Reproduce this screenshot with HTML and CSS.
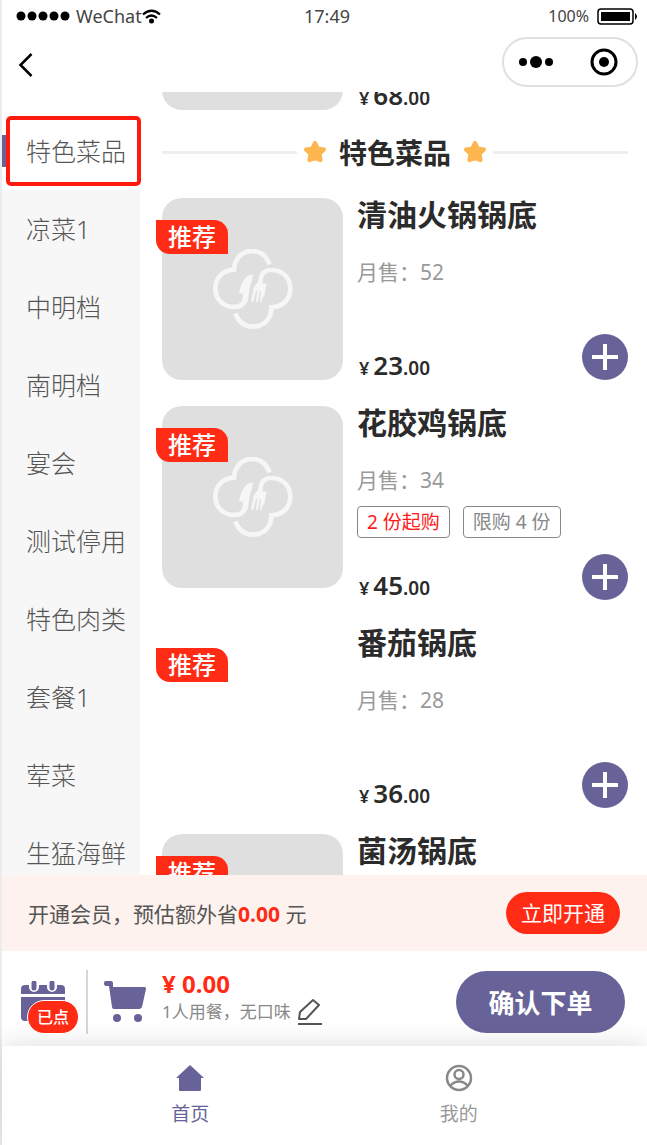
FILE: index.html
```html
<!DOCTYPE html>
<html lang="zh-CN">
<head>
    <meta charset="UTF-8">
    <meta name="viewport" content="width=device-width, initial-scale=1.0">
    <title>点餐</title>
    <link rel="stylesheet" href="styles.css">
</head>
<body>
    <!-- shared shapes -->
    <svg class="sprite" aria-hidden="true">
        <symbol id="logo" viewBox="190 180 240 240">
            <g fill="none" stroke="#f6f6f6" stroke-width="14">
                <path d="M360 226C350 200 333 186 307 186C276 186 254 210 253 242C218 244 197 268 197 299C197 331 222 354 254 354C275 354 286 344 288 322"/>
                <path d="M328 296L334 266C337 249 348 243 366 243C399 243 422 267 422 299C422 331 400 353 365 355C366 388 343 413 310 413C285 413 266 399 257 373"/>
            </g>
            <path fill="#f6f6f6" d="M311 256C288 258 276 276 268 312L281 314L276 344L293 340L300 298Z"/>
            <path fill="#f6f6f6" d="M322 282L351 284L344 318C342 325 338 325 336 338H331L334 308L330 307L325 338H319L323 306L319 305L311 338H304L312 296Z"/>
        </symbol>
        <symbol id="star" viewBox="0 0 24 24">
            <path d="M12 3L14.800 8.600L21 9.500L16.500 13.900L17.600 20.200L12 18.300L6.400 20.200L7.500 13.900L3 9.500L9.200 8.600Z" fill="#fdb64f" stroke="#fdb64f" stroke-width="4" stroke-linejoin="round"/>
        </symbol>
        <symbol id="plus" viewBox="0 0 46 46">
            <path d="M23 10V36M10 23H36" stroke="#fff" stroke-width="4"/>
        </symbol>
    </svg>

    <div class="app">
        <header class="header">
            <div class="status-bar">
                <div class="carrier">
                    <svg width="54" height="12" viewBox="0 0 54 12"><circle cx="5" cy="6" r="4.500"/><circle cx="16" cy="6" r="4.500"/><circle cx="27" cy="6" r="4.500"/><circle cx="38" cy="6" r="4.500"/><circle cx="49" cy="6" r="4.500"/></svg>
                    <span>WeChat</span>
                    <svg class="wifi" width="19" height="15" viewBox="0 0 19 15"><path d="M1 5.500Q9.500 -2 18 5.500M4 9Q9.500 4 15 9" fill="none" stroke="#000" stroke-width="2.200"/><circle cx="9.500" cy="12" r="2.500"/></svg>
                </div>
                <div class="time">17:49</div>
                <div class="battery">
                    <span>100%</span>
                    <svg width="41" height="17" viewBox="0 0 41 17"><rect x="1" y="1" width="35" height="15" rx="3" fill="none" stroke="#000" stroke-width="1.500"/><rect x="4" y="4" width="29" height="9"/><path d="M38 5Q42 8.500 38 12Z"/></svg>
                </div>
            </div>
            <div class="nav-bar">
                <button class="back" aria-label="返回">
                    <svg width="15" height="24" viewBox="0 0 15 24"><path d="M13.500 1L2.500 12L13.500 23" fill="none" stroke="#000" stroke-width="2.500"/></svg>
                </button>
                <div class="capsule">
                    <button aria-label="更多">
                        <svg width="36" height="14" viewBox="0 0 36 14"><circle cx="5" cy="7" r="4"/><circle cx="18" cy="7" r="6"/><circle cx="31" cy="7" r="4"/></svg>
                    </button>
                    <button aria-label="关闭">
                        <svg width="28" height="28" viewBox="0 0 28 28"><circle cx="14" cy="14" r="12" fill="none" stroke="#000" stroke-width="3"/><circle cx="14" cy="14" r="5"/></svg>
                    </button>
                </div>
            </div>
        </header>

        <main class="menu">
            <nav class="categories">
                <a class="category active" href="#">特色菜品</a>
                <a class="category" href="#">凉菜1</a>
                <a class="category" href="#">中明档</a>
                <a class="category" href="#">南明档</a>
                <a class="category" href="#">宴会</a>
                <a class="category" href="#">测试停用</a>
                <a class="category" href="#">特色肉类</a>
                <a class="category" href="#">套餐1</a>
                <a class="category" href="#">荤菜</a>
                <a class="category" href="#">生猛海鲜</a>
            </nav>

            <div class="dishes">
                <div class="dish scrolled">
                    <div class="thumb"></div>
                    <div class="info">
                        <div class="buy">
                            <p class="price"><small class="yen">¥</small>68<small>.00</small></p>
                        </div>
                    </div>
                </div>

                <h2 class="section-title">
                    <svg width="24" height="24"><use href="#star"/></svg>
                    <span>特色菜品</span>
                    <svg width="24" height="24"><use href="#star"/></svg>
                </h2>

                <div class="dish">
                    <div class="thumb">
                        <svg width="80" height="80"><use href="#logo"/></svg>
                        <span class="badge">推荐</span>
                    </div>
                    <div class="info">
                        <h3>清油火锅锅底</h3>
                        <p class="sales">月售：52</p>
                        <div class="buy">
                            <p class="price"><small class="yen">¥</small>23<small>.00</small></p>
                            <button class="add" aria-label="添加"><svg width="46" height="46"><use href="#plus"/></svg></button>
                        </div>
                    </div>
                </div>

                <div class="dish">
                    <div class="thumb">
                        <svg width="80" height="80"><use href="#logo"/></svg>
                        <span class="badge">推荐</span>
                    </div>
                    <div class="info">
                        <h3>花胶鸡锅底</h3>
                        <p class="sales">月售：34</p>
                        <div class="tags">
                            <span class="tag tag-red">2 份起购</span>
                            <span class="tag">限购 4 份</span>
                        </div>
                        <div class="buy">
                            <p class="price"><small class="yen">¥</small>45<small>.00</small></p>
                            <button class="add" aria-label="添加"><svg width="46" height="46"><use href="#plus"/></svg></button>
                        </div>
                    </div>
                </div>

                <div class="dish">
                    <div class="thumb empty">
                        <span class="badge">推荐</span>
                    </div>
                    <div class="info">
                        <h3>番茄锅底</h3>
                        <p class="sales">月售：28</p>
                        <div class="buy">
                            <p class="price"><small class="yen">¥</small>36<small>.00</small></p>
                            <button class="add" aria-label="添加"><svg width="46" height="46"><use href="#plus"/></svg></button>
                        </div>
                    </div>
                </div>

                <div class="dish">
                    <div class="thumb">
                        <span class="badge">推荐</span>
                    </div>
                    <div class="info">
                        <h3>菌汤锅底</h3>
                    </div>
                </div>
            </div>
        </main>

        <div class="member-bar">
            <p>开通会员，预估额外省<strong>0.00</strong> 元</p>
            <button class="btn-member">立即开通</button>
        </div>

        <div class="cart-bar">
            <button class="ordered">
                <svg width="44" height="42" viewBox="0 0 44 42">
                    <path d="M0 8Q0 4 4 4H8V6A5 5 0 0 0 18 6V4H26V6A5 5 0 0 0 36 6V4H40Q44 4 44 8V13H0Z" fill="#676398"/>
                    <path d="M0 16H44V40H4Q0 40 0 36Z" fill="#676398"/>
                    <path d="M13 2V7M31 2V7" stroke="#676398" stroke-width="5" stroke-linecap="round"/>
                </svg>
                <span class="ordered-badge">已点</span>
            </button>
            <div class="cart-icon">
                <svg width="42" height="42" viewBox="0 0 42 42" fill="#676398">
                    <path d="M2 0H7Q9 0 9 2V6H41Q42 6 42 8L38 26Q37 28 35 28H10Q8 28 8 26L5 5H2Q0 5 0 2Q0 0 2 0Z"/>
                    <circle cx="13" cy="37" r="4"/>
                    <circle cx="34" cy="37" r="4"/>
                </svg>
            </div>
            <div class="cart-info">
                <p class="total">¥ 0.00</p>
                <p class="remark">1人用餐，无口味
                    <svg width="26" height="28" viewBox="0 0 26 28" fill="none" stroke="#555" stroke-width="2"><path d="M2 21L3 14L16 2L22 7L9 21Z" stroke-linejoin="round"/><path d="M1 26H25"/></svg>
                </p>
            </div>
            <button class="btn-order">确认下单</button>
        </div>

        <nav class="tab-bar">
            <a class="tab active" href="#">
                <svg width="28" height="28" viewBox="0 0 28 28"><path d="M14 1L28 14H25V26Q25 27 24 27H4Q3 27 3 26V14H0Z" fill="#676398"/></svg>
                首页
            </a>
            <a class="tab" href="#">
                <svg width="28" height="28" viewBox="0 0 28 28" fill="none" stroke="#888" stroke-width="2.500"><circle cx="14" cy="14" r="12"/><circle cx="14" cy="10.500" r="4.500"/><path d="M5 22Q9 17.500 14 17.500T23 22"/></svg>
                我的
            </a>
        </nav>
    </div>
</body>
</html>
```
FILE: styles.css
```css
* {
    margin: 0;
    padding: 0;
    box-sizing: border-box;
}

body {
    font-family: 'Noto Sans', 'Noto Sans CJK SC', sans-serif;
    background: #fff;
    color: #2b2b2b;
}

button {
    border: none;
    background: none;
    font-family: inherit;
    cursor: pointer;
}

a {
    text-decoration: none;
}

svg {
    display: block;
    flex-shrink: 0;
}

.sprite {
    position: absolute;
    width: 0;
    height: 0;
}

.app {
    height: 100vh;
    display: flex;
    flex-direction: column;
    border-left: 2px solid #ececec;
}

/* Header */
.header {
    flex-shrink: 0;
    padding: 0 9px 0 14px;
}

.status-bar {
    display: grid;
    grid-template-columns: 1fr auto 1fr;
    align-items: center;
    height: 32px;
    font-size: 18px;
    line-height: 24px;
    color: #444;
}

.carrier,
.battery {
    display: flex;
    align-items: center;
}

.carrier span {
    margin-left: 6px;
}

.battery {
    justify-content: flex-end;
    gap: 8px;
    font-size: 16px;
}

.nav-bar {
    display: flex;
    align-items: center;
    justify-content: space-between;
    height: 60px;
}

.back {
    padding: 6px 2px 0;
}

.capsule {
    display: flex;
    align-items: center;
    justify-content: space-between;
    width: 136px;
    height: 50px;
    padding: 0 18px 0 14px;
    border: 2px solid #e0e0e0;
    border-radius: 25px;
}

/* Menu */
.menu {
    flex: 1;
    min-height: 0;
    display: flex;
    overflow: hidden;
}

.categories {
    width: 138px;
    flex-shrink: 0;
    padding-top: 20px;
}

.category {
    display: block;
    height: 78px;
    padding-left: 24px;
    background: #f7f7f7;
    color: #555;
    font-size: 25px;
    font-weight: 300;
    line-height: 78px;
    white-space: nowrap;
}

.category.active {
    position: relative;
    background: linear-gradient(#676398, #676398) left center / 4px 32px no-repeat #fff;
}

.category.active::after {
    content: '';
    position: absolute;
    inset: 4px -1px 4px 4px;
    border: 4px solid #ff1a10;
    border-radius: 5px;
}

.dishes {
    flex: 1;
    min-width: 0;
    padding: 0 19px 0 22px;
}

.dish {
    display: flex;
    gap: 14px;
    min-height: 182px;
    margin-bottom: 26px;
}

/* dish already scrolled under the header */
.dish.scrolled {
    margin-top: -164px;
    margin-bottom: 0;
}

.thumb {
    position: relative;
    display: flex;
    align-items: center;
    justify-content: center;
    width: 181px;
    height: 182px;
    flex-shrink: 0;
    border-radius: 20px;
    background: #dfdfdf;
}

.thumb.empty {
    background: none;
}

.badge {
    position: absolute;
    top: 22px;
    left: -6px;
    width: 72px;
    height: 34px;
    border-radius: 0 14px 0 14px;
    background: #ff2b14;
    color: #fff;
    font-size: 24px;
    font-weight: 500;
    line-height: 34px;
    text-align: center;
}

.info {
    flex: 1;
    display: flex;
    flex-direction: column;
}

.info h3 {
    font-size: 30px;
    line-height: 34px;
    font-weight: 700;
}

.sales {
    margin-top: 26px;
    color: #999;
    font-size: 21px;
    line-height: 28px;
}

.tags {
    display: flex;
    gap: 13px;
    margin: 12px 0 16px;
}

.tag {
    padding: 0 9px;
    border: 1px solid #888;
    border-radius: 4px;
    color: #888;
    font-size: 19px;
    line-height: 30px;
    white-space: nowrap;
}

.tag-red {
    color: #ff1a1a;
}

.buy {
    display: flex;
    align-items: flex-end;
    justify-content: space-between;
    margin-top: auto;
}

.price {
    padding-left: 2px;
    font-size: 26px;
    font-weight: 600;
    line-height: 24px;
}

.price small {
    font-size: 19px;
}

.price .yen {
    margin-right: 4px;
    font-size: 18px;
}

.add {
    width: 46px;
    height: 46px;
    border-radius: 50%;
    background: #676398;
}

.section-title {
    display: flex;
    align-items: center;
    gap: 6px;
    height: 84px;
    margin-bottom: 4px;
    font-size: 28px;
    white-space: nowrap;
}

.section-title span {
    padding: 0 6px;
}

.section-title::before,
.section-title::after {
    content: '';
    flex: 1;
    height: 3px;
    background: #eee;
}

/* Member bar */
.member-bar {
    flex-shrink: 0;
    display: flex;
    align-items: center;
    justify-content: space-between;
    height: 76px;
    padding: 0 27px 0 26px;
    background: #fef2ee;
    color: #555;
    font-size: 21px;
}

.member-bar strong {
    color: #ff2b14;
}

.btn-member {
    width: 114px;
    height: 42px;
    border-radius: 21px;
    background: #ff2b14;
    color: #fff;
    font-size: 21px;
    line-height: 42px;
}

/* Cart bar */
.cart-bar {
    flex-shrink: 0;
    display: flex;
    align-items: center;
    height: 95px;
    padding: 6px 22px 0 19px;
}

.ordered {
    position: relative;
}

.ordered-badge {
    position: absolute;
    top: 19px;
    left: 6px;
    width: 52px;
    height: 34px;
    border: 1px solid #fff;
    border-radius: 17px;
    background: #ff2b14;
    color: #fff;
    font-size: 16px;
    font-weight: 500;
    line-height: 32px;
}

.cart-icon {
    display: flex;
    align-items: center;
    height: 64px;
    margin-left: 21px;
    padding-left: 16px;
    border-left: 2px solid #d5d5d5;
}

.cart-info {
    flex: 1;
    margin-left: 16px;
    padding-bottom: 8px;
}

.total {
    color: #ff2b14;
    font-size: 24px;
    font-weight: 700;
    line-height: 28px;
}

.remark {
    display: flex;
    align-items: center;
    gap: 6px;
    color: #888;
    font-size: 17px;
    line-height: 24px;
    white-space: nowrap;
}

.btn-order {
    width: 169px;
    height: 62px;
    border-radius: 31px;
    background: #676398;
    color: #fff;
    font-size: 26px;
    font-weight: 700;
}

/* Tab bar */
.tab-bar {
    flex-shrink: 0;
    display: flex;
    height: 99px;
    padding: 0 54px;
    background: #fff;
    box-shadow: 0 -2px 24px rgba(0,0,0,0.12);
}

.tab {
    flex: 1;
    display: flex;
    flex-direction: column;
    align-items: center;
    gap: 8px;
    padding-top: 18px;
    color: #999;
    font-size: 19px;
    line-height: 28px;
}

.tab.active {
    color: #676398;
}
```
